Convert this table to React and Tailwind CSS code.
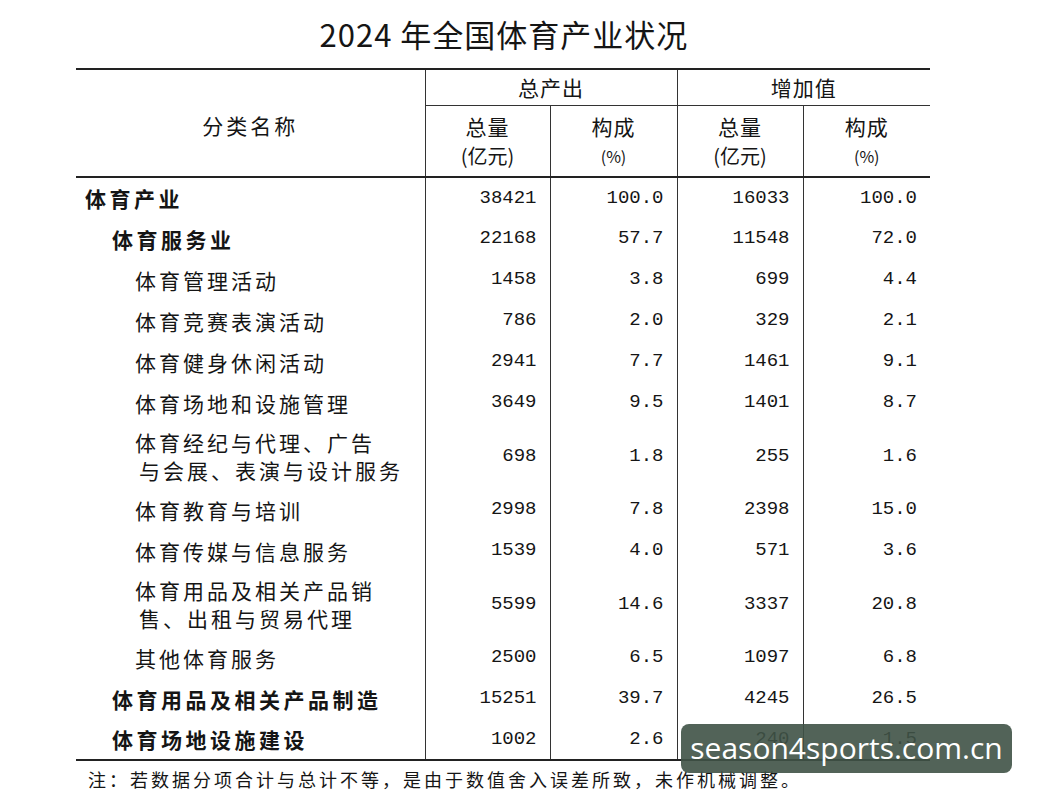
import React from 'react';

const rows = [
  { name: ['体育产业'], level: 0, v: ['38421', '100.0', '16033', '100.0'] },
  { name: ['体育服务业'], level: 1, v: ['22168', '57.7', '11548', '72.0'] },
  { name: ['体育管理活动'], level: 2, v: ['1458', '3.8', '699', '4.4'] },
  { name: ['体育竞赛表演活动'], level: 2, v: ['786', '2.0', '329', '2.1'] },
  { name: ['体育健身休闲活动'], level: 2, v: ['2941', '7.7', '1461', '9.1'] },
  { name: ['体育场地和设施管理'], level: 2, v: ['3649', '9.5', '1401', '8.7'] },
  { name: ['体育经纪与代理、广告', '与会展、表演与设计服务'], level: 2, v: ['698', '1.8', '255', '1.6'] },
  { name: ['体育教育与培训'], level: 2, v: ['2998', '7.8', '2398', '15.0'] },
  { name: ['体育传媒与信息服务'], level: 2, v: ['1539', '4.0', '571', '3.6'] },
  { name: ['体育用品及相关产品销', '售、出租与贸易代理'], level: 2, v: ['5599', '14.6', '3337', '20.8'] },
  { name: ['其他体育服务'], level: 2, v: ['2500', '6.5', '1097', '6.8'] },
  { name: ['体育用品及相关产品制造'], level: 1, v: ['15251', '39.7', '4245', '26.5'] },
  { name: ['体育场地设施建设'], level: 1, v: ['1002', '2.6', '240', '1.5'] },
];

const cjk = "font-['Noto_Sans_CJK_SC',sans-serif]";
const mono = "font-['Liberation_Mono','Noto_Sans_CJK_SC',monospace]";

const indent = ['pl-[9px]', 'pl-[36px]', 'pl-[59px]'];

export default function App() {
  return (
    <div className={`relative w-[1038px] h-[800px] bg-white text-[#151515] overflow-hidden ${cjk}`}>
      <h1 className="pt-[13px] h-[68px] text-center text-[31px] leading-[42px] tracking-[1px] pr-[30px]">
        2024 年全国体育产业状况
      </h1>

      <table className="ml-[76px] w-[854px] border-collapse table-fixed">
        <colgroup>
          <col className="w-[349px]" />
          <col className="w-[125px]" />
          <col className="w-[127px]" />
          <col className="w-[126px]" />
          <col className="w-[127px]" />
        </colgroup>
        <thead>
          <tr className="h-[36px] border-t-2 border-[#222]">
            <th rowSpan={2} className="font-normal text-[21px] tracking-[3px] align-top pt-[40px] border-r-[1.5px] border-[#333]">
              分类名称
            </th>
            <th colSpan={2} className="font-normal text-[21px] tracking-[1px] border-r-[1.5px] border-b-[1.5px] border-[#333]">总产出</th>
            <th colSpan={2} className="font-normal text-[21px] tracking-[1px] border-b-[1.5px] border-[#333]">增加值</th>
          </tr>
          <tr className="h-[72px] border-b-2 border-[#222]">
            {['总量|(亿元)', '构成|(%)', '总量|(亿元)', '构成|(%)'].map((t, i) => {
              const [a, b] = t.split('|');
              return (
                <th key={i} className={`font-normal leading-[30px] ${i < 3 ? 'border-r-[1.5px] border-[#333]' : ''}`}>
                  <div className="text-[21px] tracking-[1px]">{a}</div>
                  <div className={b === '(%)' ? 'text-[16px]' : 'text-[20px]'}>{b}</div>
                </th>
              );
            })}
          </tr>
        </thead>
        <tbody>
          {rows.map((r, i) => (
            <tr key={i} className={`${r.name.length > 1 ? 'h-[66px]' : 'h-[41px]'} ${i === rows.length - 1 ? 'border-b-2 border-[#222]' : ''}`}>
              <td className={`${indent[r.level]} ${r.level < 2 ? 'font-bold tracking-[3.5px]' : 'tracking-[3px]'} text-[21px] leading-[28px] border-r-[1.5px] border-[#333]`}>
                {r.name.map((n, j) => (
                  <div key={j} className={j > 0 ? 'pl-[4px]' : ''}>{n}</div>
                ))}
              </td>
              {r.v.map((v, j) => (
                <td key={j} className={`${mono} text-[19px] text-right pr-[13px] ${j < 3 ? 'border-r-[1.5px] border-[#333]' : ''}`}>
                  {v}
                </td>
              ))}
            </tr>
          ))}
        </tbody>
      </table>

      <p className="ml-[88px] mt-[6px] text-[18px] tracking-[3px] leading-[24px]">
        注：若数据分项合计与总计不等，是由于数值舍入误差所致，未作机械调整。
      </p>

      <div className="absolute left-[681px] top-[724px] w-[331px] h-[49px] rounded-[8px] bg-[#3f5246]/90 flex items-center justify-center">
        <span className="text-white text-[30px] font-['Open_Sans',sans-serif] leading-none pb-[1px]">
          season4sports.com.cn
        </span>
      </div>
    </div>
  );
}
